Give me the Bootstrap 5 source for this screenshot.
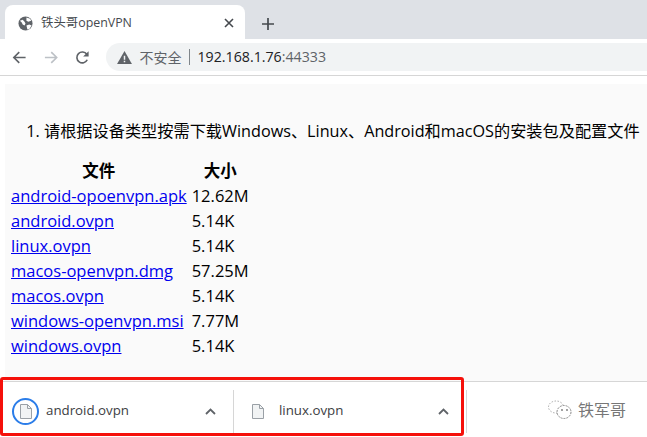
<!DOCTYPE html>
<html lang="en">
<head>
  <meta charset="UTF-8">
  <title>铁头哥openVPN</title>
  <link href="https://cdn.jsdelivr.net/npm/bootstrap@5.3.0/dist/css/bootstrap.min.css" rel="stylesheet">
  <style>
    html, body { height: 437px; overflow: hidden; }
    body { width: 647px; background: #fff; font-family: "Open Sans", "Noto Sans CJK SC", sans-serif; position: relative; }
    .tab-strip { height: 39px; background: #dee1e6; padding-left: 5px; }
    .tab-shape { width: 240px; height: 34px; margin-top: 5px; background: #fff; border-radius: 8px 8px 0 0; padding: 2px 11px 0 13px; font-size: 12.4px; color: #45494e; }
    .tool-row { height: 37px; border-bottom: 1px solid #d6d6d6; padding-left: 12px; gap: 17px; }
    .addr-pill { width: 560px; height: 28px; margin-left: -1px; background: #f1f3f4; border-radius: 14px 0 0 14px; padding-left: 11px; font-size: 14.2px; color: #202124; white-space: nowrap; }
    .addr-warn { color: #5f6368; font-size: 14px; }
    .addr-sep { width: 1px; height: 16px; background: #80868b; margin: 0 8px 0 7px; }
    .addr-icon { margin-right: 8px; }
    .addr-port { color: #5f6368; }
    .page-area { height: 305px; padding: 8px 0 0 5px; }
    .page-sheet { height: 297px; background: #fafafa; color: #000; padding-top: 35px; }
    .step-list { margin: 0 0 16px; padding-left: 39px; white-space: nowrap; line-height: 24px; font-size: 16.2px; }
    .file-table { border-collapse: separate; border-spacing: 1px 0; margin-left: 3px; font-size: 16.5px; }
    .file-table th { text-align: center; font-weight: 700; height: 25px; padding: 0 2px; }
    .file-table td { height: 25px; padding: 0 2px; white-space: nowrap; }
    .file-table a { color: #00e; }
    .dl-bar { height: 56px; border-top: 1px solid #d6d6d6; padding-top: 3px; font-size: 13.3px; color: #3c4043; }
    .dl-item { height: 100%; padding-left: 12px; }
    .dl-first { width: 233px; }
    .dl-second { width: 232px; padding-left: 18px; }
    .dl-rule { width: 1px; height: 43px; background: #d6d6d6; flex: none; }
    .dl-ring { width: 27px; height: 27px; border: 2px solid #2b7de9; border-radius: 50%; flex: none; }
    .dl-name { margin-left: 7px; flex-grow: 1; }
    .dl-name-two { margin-left: 15px; }
    .dl-caret { margin-right: 17px; }
    .red-frame { position: absolute; left: 0; top: 377px; width: 464px; height: 59px; border: 3px solid #f5100a; border-radius: 3px; pointer-events: none; }
    .wx-mark { position: absolute; left: 547px; top: 398px; color: #777; font-size: 16px; gap: 5px; }
  </style>
</head>
<body>
  <div class="tab-strip d-flex align-items-end">
    <div class="tab-shape d-flex align-items-center">
      <svg width="15" height="15" viewBox="0 0 16 16" class="me-2"><circle cx="8" cy="8" r="7.5" fill="#5f6368"/><path d="M2 5l3-1 2 2 1 2-1 2-2-1-1-2zM9 1.500l4 1.500 1 2-3 1-2-1zM9 10l3-1 2.500 1-2.500 4-2 .5z" fill="#fff"/></svg>
      <span class="flex-grow-1">铁头哥openVPN</span>
      <svg width="10" height="10" viewBox="0 0 10 10"><path d="M1 1l8 8M9 1l-8 8" stroke="#45494e" stroke-width="1.6"/></svg>
    </div>
    <svg class="ms-3 mb-2" width="14" height="14" viewBox="0 0 14 14"><path d="M7 1v12M1 7h12" stroke="#45494e" stroke-width="1.7"/></svg>
  </div>

  <div class="tool-row d-flex align-items-center">
    <svg width="15" height="15" viewBox="0 0 16 16"><path d="M15 8H2M8 2L2 8l6 6" fill="none" stroke="#5f6368" stroke-width="1.8"/></svg>
    <svg width="15" height="15" viewBox="0 0 16 16"><path d="M1 8h13M8 2l6 6-6 6" fill="none" stroke="#bdc1c6" stroke-width="1.8"/></svg>
    <svg width="15" height="15" viewBox="0 0 16 16"><path d="M13.500 10.500A6 6 0 1 1 13 4.500" fill="none" stroke="#5f6368" stroke-width="1.8"/><path d="M15 1v6H9z" fill="#5f6368"/></svg>
    <div class="addr-pill d-flex align-items-center">
      <svg width="15" height="13" viewBox="0 0 16 14" class="addr-icon"><path d="M8 0l8 14H0z" fill="#5f6368"/><path d="M7.200 5h1.600v4.500H7.200zM7.200 10.500h1.600V12H7.200z" fill="#f1f3f4"/></svg>
      <span class="addr-warn">不安全</span>
      <span class="addr-sep"></span>
      <span>192.168.1.76<span class="addr-port">:44333</span></span>
    </div>
  </div>

  <div class="page-area">
    <div class="page-sheet">
      <ol class="step-list">
        <li>请根据设备类型按需下载Windows、Linux、Android和macOS的安装包及配置文件</li>
      </ol>
      <table class="file-table">
        <tr><th>文件</th><th>大小</th></tr>
        <tr><td><a href="#">android-opoenvpn.apk</a></td><td>12.62M</td></tr>
        <tr><td><a href="#">android.ovpn</a></td><td>5.14K</td></tr>
        <tr><td><a href="#">linux.ovpn</a></td><td>5.14K</td></tr>
        <tr><td><a href="#">macos-openvpn.dmg</a></td><td>57.25M</td></tr>
        <tr><td><a href="#">macos.ovpn</a></td><td>5.14K</td></tr>
        <tr><td><a href="#">windows-openvpn.msi</a></td><td>7.77M</td></tr>
        <tr><td><a href="#">windows.ovpn</a></td><td>5.14K</td></tr>
      </table>
    </div>
  </div>

  <div class="dl-bar d-flex align-items-center">
    <div class="dl-item dl-first d-flex align-items-center">
      <div class="dl-ring d-flex align-items-center justify-content-center">
        <svg width="12" height="15" viewBox="0 0 12 15"><path d="M.5.5h7l4 4v10H.5z" fill="#f1f3f4" stroke="#9aa0a6"/><path d="M7.5.5v4h4" fill="none" stroke="#9aa0a6"/></svg>
      </div>
      <span class="dl-name">android.ovpn</span>
      <svg class="dl-caret" width="11" height="7" viewBox="0 0 11 7"><path d="M1 6l4.5-4.5L10 6" fill="none" stroke="#5f6368" stroke-width="1.8"/></svg>
    </div>
    <div class="dl-rule"></div>
    <div class="dl-item dl-second d-flex align-items-center">
      <svg width="12" height="15" viewBox="0 0 12 15"><path d="M.5.5h7l4 4v10H.5z" fill="#f1f3f4" stroke="#9aa0a6"/><path d="M7.5.5v4h4" fill="none" stroke="#9aa0a6"/></svg>
      <span class="dl-name dl-name-two">linux.ovpn</span>
      <svg class="dl-caret" width="11" height="7" viewBox="0 0 11 7"><path d="M1 6l4.5-4.5L10 6" fill="none" stroke="#5f6368" stroke-width="1.8"/></svg>
    </div>
    <div class="dl-rule"></div>
  </div>

  <div class="red-frame"></div>
  <div class="wx-mark d-flex align-items-center">
    <svg width="26" height="20" viewBox="0 0 26 20"><ellipse cx="9" cy="7" rx="7.5" ry="6" fill="#fff" stroke="#aaa" stroke-dasharray="1.5 1.5"/><ellipse cx="17" cy="12" rx="7" ry="6.5" fill="#fff" stroke="#888" stroke-dasharray="2 1"/><circle cx="15" cy="10" r=".9" fill="#777"/><circle cx="20" cy="10" r=".9" fill="#777"/></svg>
    <span>铁军哥</span>
  </div>

  <script src="https://cdn.jsdelivr.net/npm/bootstrap@5.3.0/dist/js/bootstrap.bundle.min.js"></script>
</body>
</html>
